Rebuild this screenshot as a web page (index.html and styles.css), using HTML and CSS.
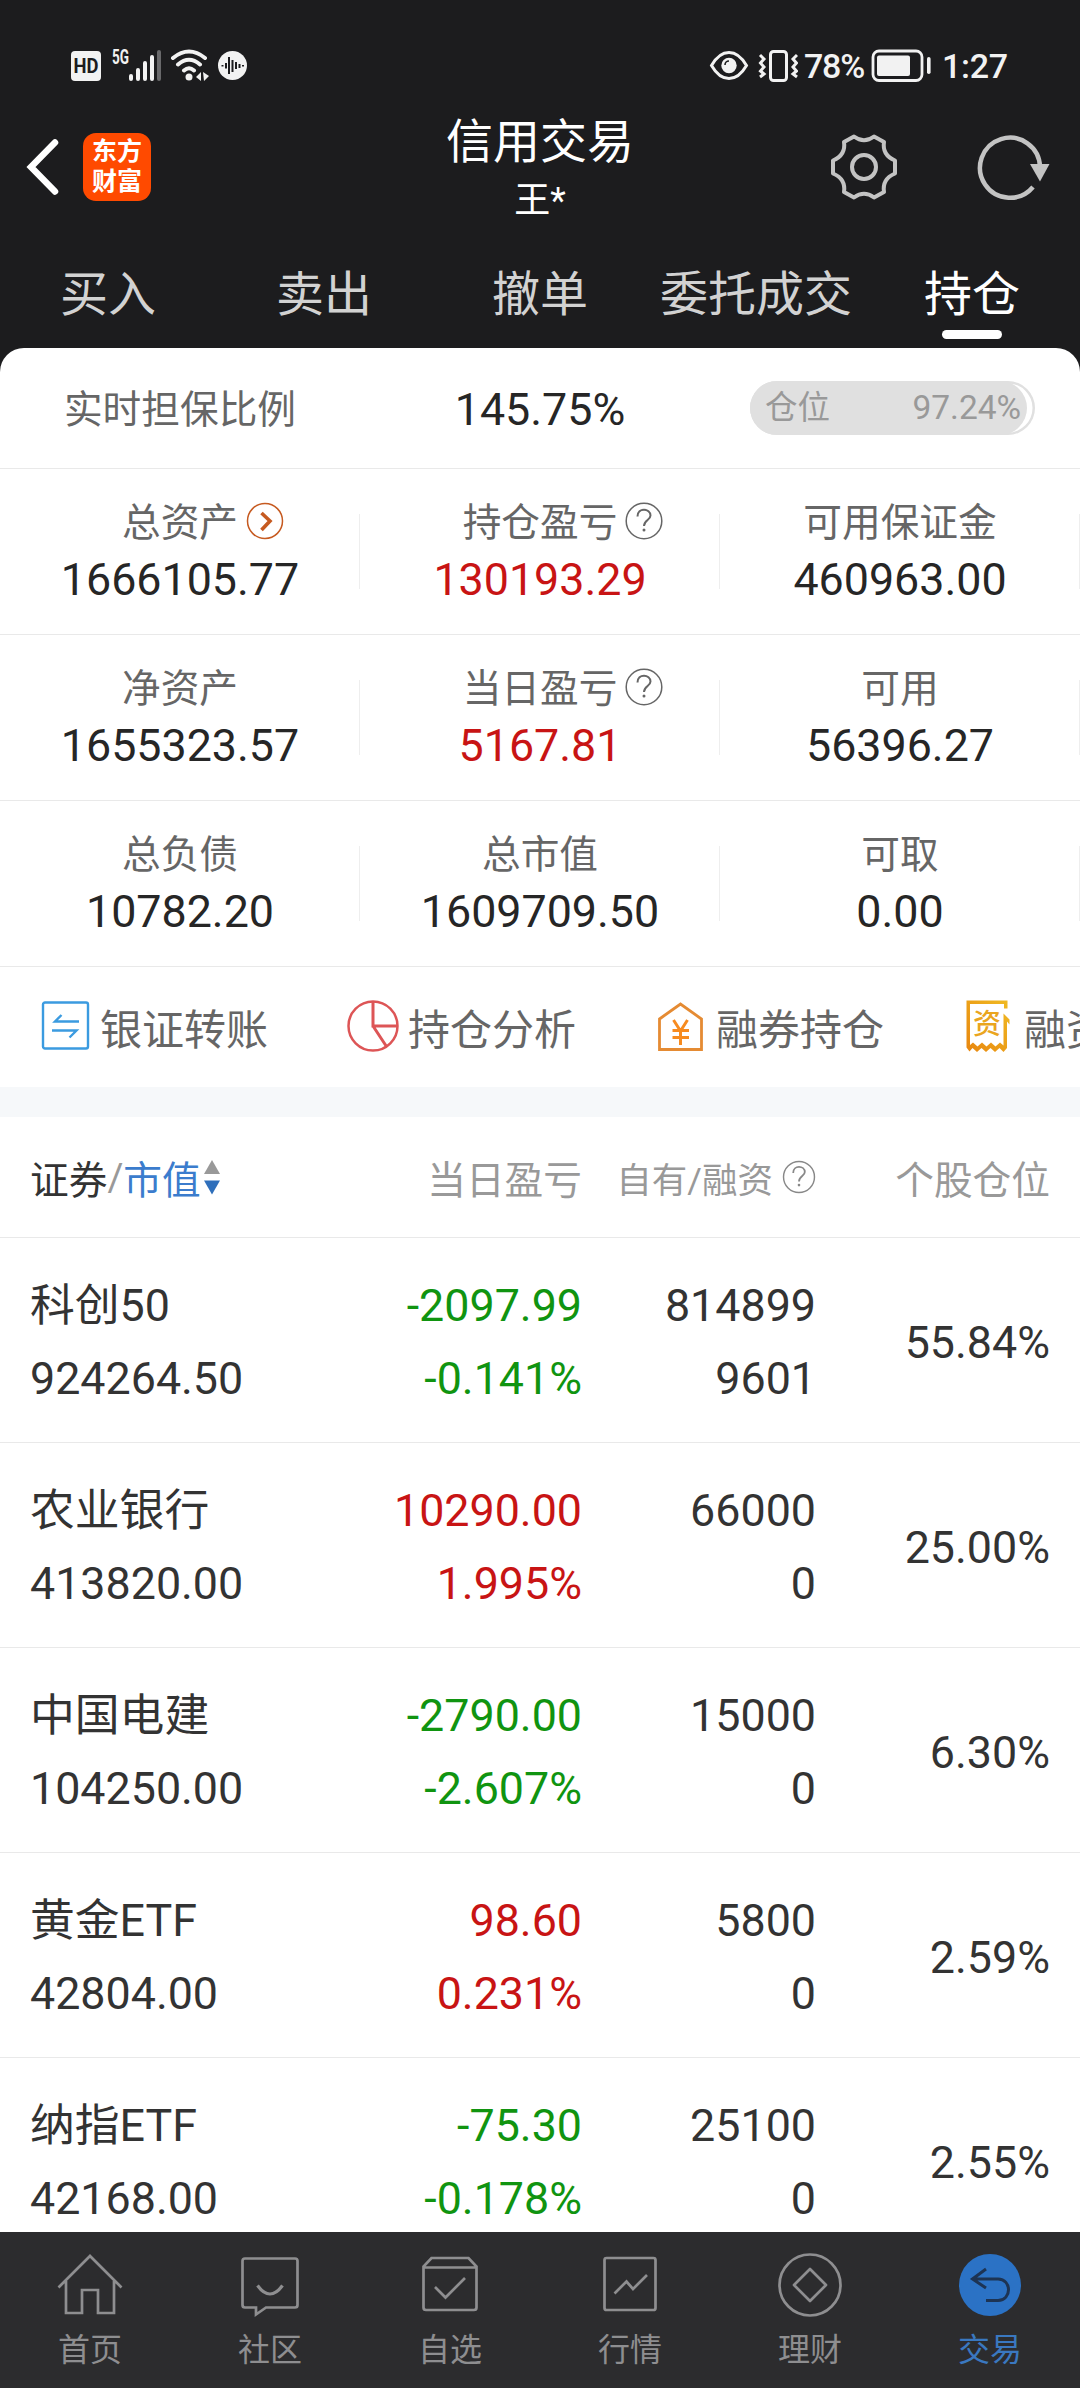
FILE: index.html
```html
<!DOCTYPE html>
<html lang="zh-CN">
<head>
<meta charset="utf-8">
<title>信用交易</title>
<link rel="stylesheet" href="styles.css">
</head>
<body>
<div class="app">
  <div class="status">
    <div class="status-left">
      <svg width="180" height="36" viewBox="0 0 180 36">
        <rect x="3" y="5" width="30" height="30" rx="4" fill="#f2f2f2"/>
        <text x="5.500" y="27" font-size="20" font-weight="700" class="st" fill="#1c1c1e" textLength="25" lengthAdjust="spacingAndGlyphs">HD</text>
        <text x="44" y="17.500" font-size="20" font-weight="700" class="st" fill="#f2f2f2" textLength="17" lengthAdjust="spacingAndGlyphs">5G</text>
        <g stroke="#f2f2f2" stroke-width="4" stroke-linecap="round"><path d="M63 30v3M70 24v9M77 17v16M84 11v22"/><path stroke="#69696b" d="M91 6v27"/></g>
        <g fill="none" stroke="#f2f2f2" stroke-width="4" stroke-linecap="round"><path d="M105 12Q121 -1 137 12M110 18.500Q121 9 132 18.500M116 24.500Q121 20 126 24.500"/></g>
        <circle cx="121" cy="31" r="3.500" fill="#f2f2f2"/>
        <path d="M128 31l5-5v9zM135 26l6 4-5 5z" fill="#f2f2f2"/>
        <circle cx="164.500" cy="19.500" r="14.500" fill="#f2f2f2"/>
        <path d="M154.500 19v1.500M158 17v5.500M161 11v17M164.500 14v12M168 16v7M171.500 18v4M175 19v1.500" stroke="#1c1c1e" stroke-width="2"/>
      </svg>
    </div>
    <div class="status-right">
      <svg width="90" height="36" viewBox="0 0 90 36">
        <path d="M3.500 19.500Q11 6.500 21 6.500T38.500 19.500Q31 32.500 21 32.500T3.500 19.500Z" fill="none" stroke="#f2f2f2" stroke-width="3"/>
        <circle cx="21" cy="19.500" r="7.700" fill="#f2f2f2"/><path d="M17 19a4 4 0 0 1 4-4" stroke="#1c1c1e" stroke-width="1.600" fill="none"/>
        <rect x="62.500" y="5.500" width="16" height="29" rx="3" fill="none" stroke="#f2f2f2" stroke-width="3"/>
        <path d="M52 9l4 4-3.500 4 3.500 4-3.500 4 3.500 3-4 3M89 9l-4 4 3.500 4-3.500 4 3.500 4-3.500 3 4 3" fill="none" stroke="#f2f2f2" stroke-width="3"/>
      </svg>
      <span class="pct">78%</span>
      <svg width="62" height="36" viewBox="0 0 62 36">
        <rect x="2" y="5" width="49" height="29.500" rx="6" fill="none" stroke="#f2f2f2" stroke-width="2.800"/>
        <rect x="6" y="9.500" width="33" height="20.500" rx="2" fill="#f2f2f2"/>
        <rect x="56" y="11" width="3.600" height="17" rx="1.800" fill="#f2f2f2"/>
      </svg>
      <span class="time">1:27</span>
    </div>
  </div>

  <header class="header">
    <div class="header-side">
      <svg class="back" width="36" height="60" viewBox="0 0 36 60"><path d="M30 5.500L6 30l24 24.500" fill="none" stroke="#fff" stroke-width="6.500" stroke-linecap="round"/></svg>
      <div class="logo"><span>东方</span><span>财富</span></div>
    </div>
    <div class="titles"><h1>信用交易</h1><p>王*</p></div>
    <div class="header-side header-right">
      <svg width="70" height="70" viewBox="-35 -35 70 70" fill="none" stroke="#c3c3c3" stroke-width="4">
        <path stroke-linejoin="round" d="M-10 -30.500Q0 -23 10 -30.500L20 -25Q18 -12 31 -6.500V6.500Q18 12 20 25L10 30.500Q0 23 -10 30.500L-20 25Q-18 12 -31 6.500V-6.500Q-18 -12 -20 -25Z"/>
        <circle r="12"/>
      </svg>
      <svg width="76" height="70" viewBox="-35 -35 76 70"><path d="M30 0A30 30 0 1 0 23 20" fill="none" stroke="#c3c3c3" stroke-width="4.500"/><path d="M20 -3h19.500L30 14.500z" fill="#c3c3c3"/></svg>
    </div>
  </header>

  <nav class="tabs"><span>买入</span><span>卖出</span><span>撤单</span><span>委托成交</span><span class="active">持仓</span></nav>

  <main class="panel">
    <section class="ratio">
      <div class="label">实时担保比例</div>
      <div class="num">145.75%</div>
      <div class="pill-wrap"><div class="pill"><div class="fill" style="width:97.24%"><span>仓位</span><span class="pill-num">97.24%</span></div></div></div>
    </section>
    <section class="assets">
      <div class="cell"><div class="label">总资产<svg class="mark" width="38" height="38" viewBox="0 0 38 38" fill="none" stroke="#c65a20"><circle cx="19" cy="19" r="17.500" stroke-width="1.500"/><path d="M15.500 11l8.500 8-8.500 9" stroke-width="3.600"/></svg></div><div class="num">1666105.77</div></div>
      <div class="cell"><div class="label">持仓盈亏<svg class="mark" width="38" height="38" viewBox="0 0 38 38" fill="none" stroke="#666" stroke-width="1.500"><circle cx="19" cy="19" r="17.800"/><path d="M12.500 14.500C12.500 5 25.500 6 25.500 13.500C25.500 18 19 18 19 24" stroke-width="2"/><circle cx="19" cy="28" r="1.500" fill="#666" stroke="none"/></svg></div><div class="num up">130193.29</div></div>
      <div class="cell"><div class="label">可用保证金</div><div class="num">460963.00</div></div>
      <div class="cell"><div class="label">净资产</div><div class="num">1655323.57</div></div>
      <div class="cell"><div class="label">当日盈亏<svg class="mark" width="38" height="38" viewBox="0 0 38 38" fill="none" stroke="#666" stroke-width="1.500"><circle cx="19" cy="19" r="17.800"/><path d="M12.500 14.500C12.500 5 25.500 6 25.500 13.500C25.500 18 19 18 19 24" stroke-width="2"/><circle cx="19" cy="28" r="1.500" fill="#666" stroke="none"/></svg></div><div class="num up">5167.81</div></div>
      <div class="cell"><div class="label">可用</div><div class="num">56396.27</div></div>
      <div class="cell"><div class="label">总负债</div><div class="num">10782.20</div></div>
      <div class="cell"><div class="label">总市值</div><div class="num">1609709.50</div></div>
      <div class="cell"><div class="label">可取</div><div class="num">0.00</div></div>
    </section>
    <section class="tools">
      <div class="tool"><svg width="54" height="54" viewBox="0 0 54 54" fill="none" stroke="#3b9be0" stroke-width="2.400"><rect x="5" y="3.500" width="45" height="46" rx="2"/><path d="M41 22.500H17l6.500-6.500M14 31.500h24.500l-7 7"/></svg><span>银证转账</span></div>
      <div class="tool"><svg width="54" height="54" viewBox="0 0 54 54" fill="none" stroke="#dd5556" stroke-width="2.500"><circle cx="27" cy="27" r="24.500"/><path d="M27 2.500V27h24.500M27 27l13.500 20.500" stroke-width="3"/></svg><span>持仓分析</span></div>
      <div class="tool"><svg width="54" height="54" viewBox="0 0 54 54" fill="none" stroke="#e58b33" stroke-width="2.800"><path d="M5.500 20L26.500 5l21 15v30.500h-42z"/><path d="M19.500 21l7 11 7-11M26.500 32v14M18.500 31.500h16.500M18.500 38.500h16.500" stroke="#f78b1f" stroke-width="3"/></svg><span>融券持仓</span></div>
      <div class="tool"><svg width="54" height="54" viewBox="0 0 54 54" fill="none"><defs><linearGradient id="gold" x1="0" y1="1" x2="1" y2="0"><stop offset="0" stop-color="#e8860f"/><stop offset="1" stop-color="#f0bb22"/></linearGradient></defs><path fill="url(#gold)" d="M4.500 1.500h41v8h-3.500V5H8v41l3-2.500 4.500 4 4.500-4 4.500 4 4.500-4 4.500 4 4.500-4 3.500 3V14.500l6 6v5l-2.500-3V49l-3.500 4-4-4-4.500 4-4.500-4-4.500 4-4.500-4-4.500 4-4.500-4-3 3.500-3-4z"/><text x="25" y="35" font-size="28" font-weight="500" class="zi" text-anchor="middle" fill="#eaa51e">资</text></svg><span>融资持仓</span></div>
    </section>
    <div class="band"></div>
    <section class="holdings">
      <div class="row head">
        <div class="sort"><b>证券</b>/<i>市值</i><svg width="18" height="36" viewBox="0 0 18 36"><path d="M1 15L9 1l8 14z" fill="#999"/><path d="M1 21.500h16L9 35.500z" fill="#2f6fbb"/></svg></div>
        <div>当日盈亏</div>
        <div class="own">自有/融资<svg width="34" height="34" viewBox="0 0 38 38" fill="none" stroke="#888" stroke-width="1.600"><circle cx="19" cy="19" r="17.300"/><path d="M12.500 14.500C12.500 5 25.500 6 25.500 13.500C25.500 18 19 18 19 24" stroke-width="2"/><circle cx="19" cy="28" r="1.500" fill="#888" stroke="none"/></svg></div>
        <div>个股仓位</div>
      </div>
      <div class="row"><div><p>科创50</p><p>924264.50</p></div><div class="down"><p>-2097.99</p><p>-0.141%</p></div><div><p>814899</p><p>9601</p></div><div>55.84%</div></div>
      <div class="row"><div><p>农业银行</p><p>413820.00</p></div><div class="up"><p>10290.00</p><p>1.995%</p></div><div><p>66000</p><p>0</p></div><div>25.00%</div></div>
      <div class="row"><div><p>中国电建</p><p>104250.00</p></div><div class="down"><p>-2790.00</p><p>-2.607%</p></div><div><p>15000</p><p>0</p></div><div>6.30%</div></div>
      <div class="row"><div><p>黄金ETF</p><p>42804.00</p></div><div class="up"><p>98.60</p><p>0.231%</p></div><div><p>5800</p><p>0</p></div><div>2.59%</div></div>
      <div class="row"><div><p>纳指ETF</p><p>42168.00</p></div><div class="down"><p>-75.30</p><p>-0.178%</p></div><div><p>25100</p><p>0</p></div><div>2.55%</div></div>
    </section>
  </main>

  <footer class="nav">
    <div><svg width="70" height="70" viewBox="0 0 70 70"><path d="M3.500 36.500L35 5l31.500 31.500M11 30v32h16V39h16v23h16V30"/></svg><span>首页</span></div>
    <div><svg width="70" height="70" viewBox="0 0 70 70"><path d="M10 7.500h50q2.500 0 2.500 2.500v44q0 2.500-2.500 2.500H31L21 63.500v-7H10q-2.500 0-2.500-2.500V10q0-2.500 2.500-2.500z"/><path d="M22.500 34.500q12.500 17 25 0" stroke-width="3.200"/></svg><span>社区</span></div>
    <div><svg width="70" height="70" viewBox="0 0 70 70"><path d="M8.500 16.500h53V56.500q0 2.500-2.500 2.500H11q-2.500 0-2.500-2.500V15.500L16.500 7h37l8 8.500v1M20 36l10.500 10.500L50 27"/></svg><span>自选</span></div>
    <div><svg width="70" height="70" viewBox="0 0 70 70"><rect x="9.500" y="7" width="51" height="52" rx="2"/><path d="M19.500 42.500l12-12 6.500 7.500L52 24"/></svg><span>行情</span></div>
    <div><svg width="70" height="70" viewBox="0 0 70 70"><circle cx="35" cy="34" r="30.500"/><path d="M35 18l16 16-16 16-16-16z" stroke-linejoin="round"/></svg><span>理财</span></div>
    <div class="on"><svg width="70" height="70" viewBox="0 0 70 70"><circle cx="35" cy="34" r="31" fill="#2b72c5" stroke="none"/><path d="M31 18L17.500 28 31 37M18 28h25c14 0 14 21.500 0 21.500H31" stroke="#1d3454" stroke-width="3"/></svg><span>交易</span></div>
  </footer>
</div>
</body>
</html>
```
FILE: styles.css
```css
* { box-sizing: border-box; margin: 0; padding: 0; }
body { width: 1080px; height: 2388px; overflow: hidden; background: #1c1c1e; font-family: Roboto, "Noto Sans CJK SC", sans-serif; }
svg { display: block; flex: none; }
.app { display: flex; flex-direction: column; height: 2388px; }
.status { height: 112px; display: flex; justify-content: space-between; padding: 46px 72px 0 68px; color: #f2f2f2; }
.status-right { display: flex; font-size: 34px; font-weight: 500; line-height: 40px; }
.st { font-family: Roboto, sans-serif; }
.pct { width: 67px; margin-left: 6px; letter-spacing: -1.2px; }
.time { width: 66px; margin-left: 9px; letter-spacing: -0.3px; }
.header { height: 124px; display: grid; grid-template-columns: 360px 360px 360px; color: #fff; }
.header-side { display: flex; align-items: center; height: 109px; }
.back { margin-left: 25px; }
.logo { width: 68px; height: 68px; margin-left: 22px; border-radius: 13px; background: #ff4a00; display: flex; flex-direction: column; align-items: center; justify-content: center; font-size: 25px; font-weight: 700; line-height: 29.500px; }
.header-right { padding-left: 109px; gap: 76px; }
.titles { text-align: center; }
.titles h1 { font-size: 47px; font-weight: 400; line-height: 60px; }
.titles p { font-size: 36px; line-height: 58px; }
.tabs { height: 112px; display: grid; grid-template-columns: repeat(5, 216px); text-align: center; font-size: 48px; line-height: 117px; color: #d2d2d2; }
.tabs .active { color: #fff; display: flex; flex-direction: column; align-items: center; }
.tabs .active::after { content: ""; width: 60px; height: 9px; margin-top: -23px; border-radius: 5px; background: #fff; }
.panel { flex: 1; min-height: 0; overflow: hidden; background: #fff; border-radius: 24px 24px 0 0; }
.label { font-size: 38.700px; color: #666; }
.num { font-size: 44.800px; color: #262626; }
.ratio { height: 121px; padding-top: 3px; border-bottom: 1px solid #e9e9e9; display: grid; grid-template-columns: 360px 360px 360px; align-items: center; text-align: center; line-height: 60px; }
.pill-wrap { padding-left: 30px; margin-top: -3px; }
.pill { width: 285px; height: 54px; border-radius: 27px; box-shadow: inset 0 0 0 2.500px #e0e0e0; }
.fill { height: 54px; border-radius: 27px; background: #e0e0e0; display: flex; justify-content: space-between; align-items: center; padding: 0 6px 0 15px; font-size: 32.500px; color: #999; }
.pill-num { font-size: 33.500px; }
.assets { display: grid; grid-template-columns: repeat(3, 360px); grid-auto-rows: 166px; }
.cell { border-bottom: 1px solid #e9e9e9; padding-top: 25px; text-align: center; background: linear-gradient(#eee, #eee) 359px 45px / 1px 75px no-repeat; }
.cell .label { height: 57px; line-height: 57px; display: flex; justify-content: center; align-items: center; }
.cell .num { line-height: 58px; }
.mark { margin: -4px -46px 0 8px; }
.tools { display: flex; height: 120px; padding: 0 0 2px 38px; overflow: hidden; }
.tool { flex: none; width: 308px; display: flex; align-items: center; gap: 8px; font-size: 42px; color: #666; white-space: nowrap; }
.zi { font-family: "Noto Sans CJK SC", sans-serif; }
.band { height: 30px; background: #f6f8fa; }
.row { height: 205px; padding: 4px 30px 0; border-bottom: 1px solid #e9e9e9; display: grid; grid-template-columns: 310px 242px 234px 234px; align-items: center; text-align: right; font-size: 44.800px; color: #333; }
.row > :first-child { text-align: left; }
.row p { line-height: 73px; }
.head { height: 121px; padding-top: 0; font-size: 38.700px; color: #999; }
.sort { display: flex; align-items: center; }
.sort b { font-weight: 400; color: #333; }
.sort i { font-style: normal; color: #3b7ccd; }
.sort svg { margin-left: 2px; }
.own { display: flex; align-items: center; justify-content: flex-end; font-size: 35.500px; }
.own svg { margin-left: 9px; }
.row .up, .num.up { color: #c81414; }
.down { color: #109410; }
.nav { height: 156px; flex: none; background: #2c2c2e; display: grid; grid-template-columns: repeat(6, 180px); padding-top: 19px; color: #8e8e90; font-size: 32px; line-height: 58px; }
.nav div { display: flex; flex-direction: column; align-items: center; }
.nav svg { height: 70px; fill: none; stroke: #8e8e90; stroke-width: 2.700; }
.nav .on { color: #3a78c0; }
```
